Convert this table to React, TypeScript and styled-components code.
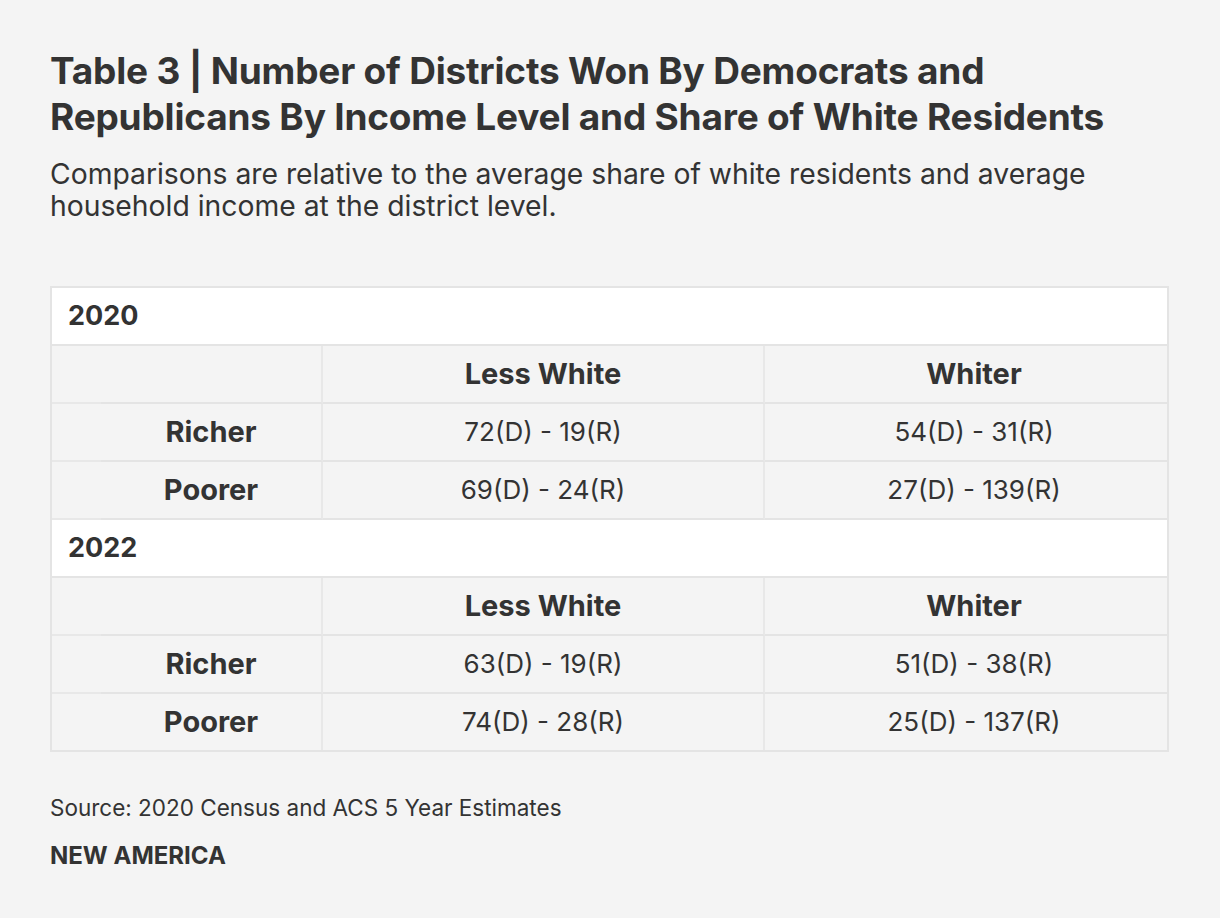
import React from "react";
import styled, { createGlobalStyle } from "styled-components";

const GlobalStyle = createGlobalStyle`
  html, body {
    margin: 0;
    padding: 0;
    background: #f4f4f4;
  }
  body {
    font-family: Inter, "Noto Sans", sans-serif;
    color: #333333;
  }
`;

const Page = styled.div`
  padding: 48px 51px 40px 50px;
  display: flex;
  flex-direction: column;
`;

const Title = styled.h1`
  margin: 0;
  font-size: 37px;
  line-height: 46px;
  font-weight: 700;
  letter-spacing: -0.2px;
  color: #333333;
`;

const Subtitle = styled.p`
  margin: 18px 0 0;
  font-size: 28.3px;
  line-height: 32px;
  font-weight: 400;
  color: #333333;
`;

const Table = styled.div`
  margin-top: 64px;
  border: 2px solid #e4e4e4;
  display: grid;
  grid-template-columns: 49px 222px 442px 1fr;
`;

const YearRow = styled.div`
  grid-column: 1 / -1;
  height: 56px;
  background: #ffffff;
  display: flex;
  align-items: center;
  padding-left: 16px;
  padding-bottom: 2px;
  font-size: 27px;
  font-weight: 700;
  border-bottom: 2px solid #e4e4e4;
  box-sizing: border-box;
  height: 58px;
`;

const Cell = styled.div<{ $bold?: boolean; $last?: boolean; $shift?: boolean }>`
  box-sizing: border-box;
  height: ${({ $last }) => ($last ? "56px" : "58px")};
  display: flex;
  align-items: center;
  justify-content: center;
  padding-left: ${({ $shift }) => ($shift ? "16px" : "0")};
  padding-bottom: 2px;
  font-size: ${({ $bold }) => ($bold ? "29px" : "26px")};
  font-weight: ${({ $bold }) => ($bold ? 700 : 400)};
  background: #f4f4f4;
  border-bottom: ${({ $last }) => ($last ? "none" : "2px solid #e4e4e4")};
`;

const Spacer = styled(Cell)`
  border-bottom: ${({ $last }) => ($last ? "none" : "2px solid #e8e8e8")};
`;

const LabelCell = styled(Cell)`
  border-right: 2px solid #e8e8e8;
`;

const MidCell = styled(Cell)`
  border-right: 2px solid #e8e8e8;
`;

const Source = styled.p`
  margin: 42px 0 0;
  font-size: 22.5px;
  line-height: 28px;
  color: #333333;
`;

const Brand = styled.p`
  margin: 20px 0 0;
  font-size: 24px;
  line-height: 28px;
  font-weight: 700;
  color: #333333;
`;

type Block = {
  year: string;
  rows: { label: string; lessWhite: string; whiter: string }[];
};

const data: Block[] = [
  {
    year: "2020",
    rows: [
      { label: "Richer", lessWhite: "72(D) - 19(R)", whiter: "54(D) - 31(R)" },
      { label: "Poorer", lessWhite: "69(D) - 24(R)", whiter: "27(D) - 139(R)" },
    ],
  },
  {
    year: "2022",
    rows: [
      { label: "Richer", lessWhite: "63(D) - 19(R)", whiter: "51(D) - 38(R)" },
      { label: "Poorer", lessWhite: "74(D) - 28(R)", whiter: "25(D) - 137(R)" },
    ],
  },
];

export default function App() {
  return (
    <>
      <GlobalStyle />
      <Page>
        <Title>
          Table 3 | Number of Districts Won By Democrats and
          <br />
          Republicans By Income Level and Share of White Residents
        </Title>
        <Subtitle>
          Comparisons are relative to the average share of white residents and average
          <br />
          household income at the district level.
        </Subtitle>
        <Table>
          {data.map((block, bi) => (
            <React.Fragment key={block.year}>
              <YearRow>{block.year}</YearRow>
              <Spacer />
              <LabelCell />
              <MidCell $bold>Less White</MidCell>
              <Cell $bold $shift>
                Whiter
              </Cell>
              {block.rows.map((r, ri) => {
                const last = bi === data.length - 1 && ri === block.rows.length - 1;
                return (
                  <React.Fragment key={r.label}>
                    <Spacer $last={last} />
                    <LabelCell $bold $last={last}>
                      {r.label}
                    </LabelCell>
                    <MidCell $last={last}>{r.lessWhite}</MidCell>
                    <Cell $last={last} $shift>
                      {r.whiter}
                    </Cell>
                  </React.Fragment>
                );
              })}
            </React.Fragment>
          ))}
        </Table>
        <Source>Source: 2020 Census and ACS 5 Year Estimates</Source>
        <Brand>NEW AMERICA</Brand>
      </Page>
    </>
  );
}
